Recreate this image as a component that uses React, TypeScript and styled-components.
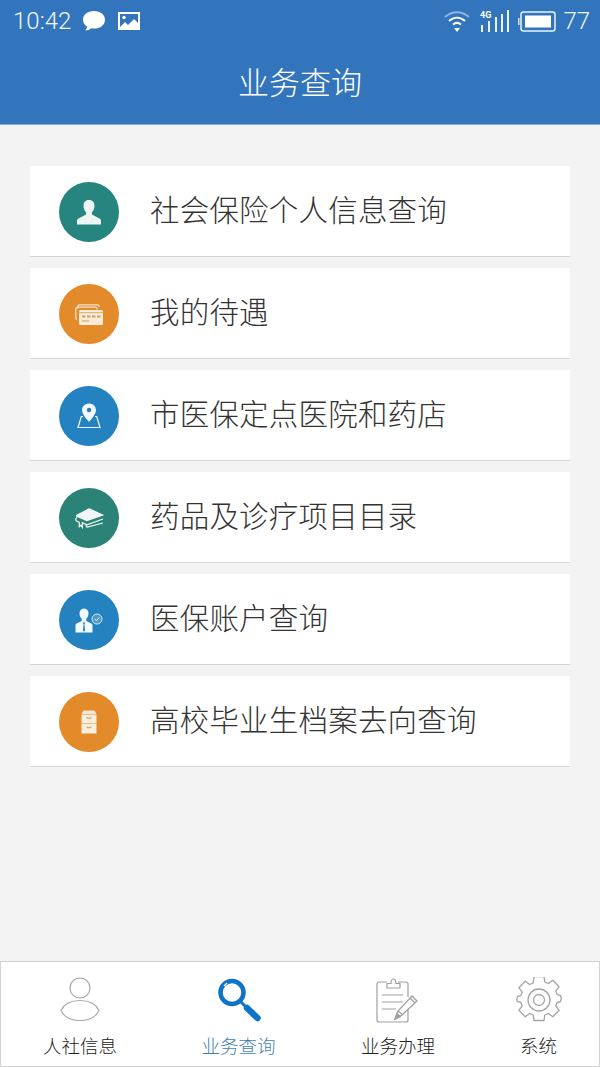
import React from 'react';
import styled, { createGlobalStyle } from 'styled-components';

const GlobalStyle = createGlobalStyle`
  html, body {
    margin: 0;
    padding: 0;
    background: #f3f3f3;
  }
  * {
    box-sizing: border-box;
  }
`;

const Wrapper = styled.div`
  width: 600px;
  height: 1067px;
  display: flex;
  flex-direction: column;
  background: #f3f3f3;
  font-family: 'Noto Sans CJK SC', 'Noto Sans', sans-serif;
  overflow: hidden;
`;

const Header = styled.header`
  height: 125px;
  flex: none;
  background: #3375bd;
  border-bottom: 1px solid #7fb0dc;
  color: #fff;
`;

const StatusBar = styled.div`
  height: 42px;
  padding: 0 10px 0 13px;
  display: flex;
  align-items: center;
  justify-content: space-between;
`;

const StatusGroup = styled.div`
  display: flex;
  align-items: center;
`;

const StatusText = styled.span<{ $gap?: number }>`
  margin-left: ${(props) => props.$gap ?? 0}px;
  font-family: Roboto, sans-serif;
  font-size: 24px;
  font-weight: 300;
  color: #f2f7fc;
`;

const StatusIcon = styled.svg<{ $gap?: number }>`
  margin-left: ${(props) => props.$gap ?? 0}px;
`;

const Title = styled.h1`
  margin: 0;
  height: 80px;
  display: flex;
  align-items: center;
  justify-content: center;
  font-size: 31px;
  font-weight: 300;
  padding-bottom: 4px;
`;

const List = styled.main`
  flex: 1;
  padding: 41px 30px 0;
  display: flex;
  flex-direction: column;
  gap: 11px;
`;

const Row = styled.div`
  height: 91px;
  padding: 2px 0 0 29px;
  display: flex;
  align-items: center;
  gap: 31px;
  background: #fff;
  border-bottom: 1px solid #d6d6d6;
`;

const Badge = styled.div<{ $color: string }>`
  width: 60px;
  height: 60px;
  flex: none;
  border-radius: 50%;
  background: ${(props) => props.$color};
  display: flex;
  align-items: center;
  justify-content: center;
`;

const RowText = styled.span`
  font-size: 29.5px;
  font-weight: 300;
  color: #333;
  letter-spacing: 0.2px;
  padding-bottom: 8px;
`;

const TabBar = styled.nav`
  height: 106px;
  flex: none;
  display: grid;
  grid-template-columns: 158px 159px 160px 1fr;
  background: #fff;
  border: 1px solid #d2d2d2;
`;

const Tab = styled.div`
  display: flex;
  flex-direction: column;
  align-items: center;
  padding-top: 14px;
`;

const TabIcon = styled.div`
  width: 48px;
  height: 48px;
  display: flex;
  align-items: center;
  justify-content: center;
`;

const TabLabel = styled.span<{ $active?: boolean }>`
  margin-top: 8px;
  font-size: 18.5px;
  font-weight: 300;
  line-height: 26px;
  color: ${(props) => (props.$active ? '#3f7fb0' : '#222')};
`;

const PersonIcon = () => (
  <svg width="26" height="26" viewBox="0 0 26 26" fill="#eef6f5">
    <path d="M13 1C9.300 1 7.500 3.600 7.500 6.800c0 2.800 1 5 2.600 6.400v2.300L2.500 19.500C1.500 20 1 21 1 22v3.500h24V22c0-1-.5-2-1.500-2.500l-7.600-4v-2.300c1.600-1.400 2.600-3.600 2.600-6.400C18.500 3.600 16.700 1 13 1z" />
  </svg>
);

const CardIcon = () => (
  <svg width="28" height="21" viewBox="0 0 28 21">
    <path d="M24 3V2.500C24 1.500 23.300.8 22.300.8H4.500C3.500.8 2.800 1.500 2.800 2.500V5" fill="none" stroke="#f5e6cf" strokeWidth="1.200" />
    <path d="M22 5.500V4.800c0-1-.7-1.600-1.600-1.600H2.500C1.500 3.200.8 3.900.8 4.800V14c0 .8.5 1.400 1.300 1.500" fill="none" stroke="#f5e6cf" strokeWidth="1.200" />
    <rect x="4" y="6" width="24" height="15" rx="1.500" fill="#f8ecd9" />
    <rect x="4" y="8" width="24" height="1.200" fill="#e2b27a" />
    <path d="M7 12.500h3.500M12 12.500h3.500M17 12.500h3.500M22 12.500h3.500" stroke="#d4a066" strokeWidth="2" />
    <path d="M7 17h7" stroke="#d9ae7a" strokeWidth="1.300" />
  </svg>
);

const MapPinIcon = () => (
  <svg width="24" height="26" viewBox="0 0 24 26">
    <path d="M12 0.500c-4.200 0-7 3-7 6.600 0 3.600 4 8.600 7 11.900 3-3.300 7-8.300 7-11.900 0-3.600-2.800-6.600-7-6.600z" fill="#f2f8fc" />
    <circle cx="12" cy="7" r="2.200" fill="#2382bf" />
    <path d="M6 13.500H4.300L1 24.500h22l-3.300-11H18" fill="none" stroke="#f2f8fc" strokeWidth="1.200" />
  </svg>
);

const BookIcon = () => (
  <svg width="29" height="21" viewBox="0 0 29 21">
    <path d="M13.500.5c.5-.2 1-.2 1.500 0l13.500 6.300c.4.200.4.600 0 .8L11.800 13.300 2 9c-1.400-.6-1.400-1.500-.5-2.200z" fill="#f0f7f5" />
    <path d="M1.800 9.500c-1.600 1.400-1.400 3 .2 3.800l2.300 1.100v4.300l1.600-1.500 1.500 2.200v-4.700l4.500 2.200L28 11M11.900 16.200c-1.200 1-1 2.400.2 2.900L28 15" fill="none" stroke="#f0f7f5" strokeWidth="1.200" />
  </svg>
);

const AccountIcon = () => (
  <svg width="28" height="25" viewBox="0 0 28 25">
    <path d="M9 0.500c-3 0-4.500 2.200-4.500 4.800 0 2.300.9 4.300 2.200 5.500v2.200L1.500 15.500C.7 16 .5 16.700.5 17.500v7h17v-7c0-.8-.2-1.500-1-2l-5.200-2.500v-2.200c1.300-1.200 2.200-3.200 2.200-5.500C13.500 2.700 12 .5 9 .5z" fill="#f2f8fc" />
    <path d="M9 13.500l-1 1.700.6 1.200-.7 5.600 1.100 2 1.100-2-.7-5.600.6-1.200z" fill="#2382bf" />
    <circle cx="22" cy="11" r="5" fill="#4d9ac9" stroke="#d7e8f3" strokeWidth="1" />
    <path d="M19.700 11l1.700 1.700 3-3.200" fill="none" stroke="#f2f8fc" strokeWidth="1" />
  </svg>
);

const CabinetIcon = () => (
  <svg width="16" height="24" viewBox="0 0 16 24">
    <path d="M2.500 0.500h11L15.500 4H.5z" fill="#f3e6d2" />
    <rect x=".5" y="4.500" width="15" height="9" fill="#f9eedd" />
    <rect x=".5" y="14" width="15" height="9.500" fill="#f9eedd" />
    <path d="M6 7v1.200h4V7M6 16.500v1.200h4v-1.200" fill="none" stroke="#cf9c5a" strokeWidth="1" />
  </svg>
);

const UserOutlineIcon = () => (
  <svg width="40" height="46" viewBox="0 0 40 46" fill="none" stroke="#a8a8a8" strokeWidth="1.200">
    <circle cx="20" cy="11" r="10" />
    <path d="M1 33.500C4 27 11 23.500 20 23.500s16 3.500 19 10c-3 6.500-10 10-19 10S4 40 1 33.500z" />
  </svg>
);

const SearchIcon = () => (
  <svg width="44" height="44" viewBox="0 0 44 44" fill="none">
    <circle cx="15" cy="14.500" r="11.500" stroke="#0f74c8" strokeWidth="4.500" />
    <path d="M23 23l6 6" stroke="#0f74c8" strokeWidth="3" />
    <path d="M30 30l10.500 10" stroke="#0f74c8" strokeWidth="6.500" strokeLinecap="round" />
    <path d="M7 8l3-3" stroke="#fff" strokeWidth="1.500" />
  </svg>
);

const ClipboardIcon = () => (
  <svg width="44" height="46" viewBox="0 0 44 46" fill="none" stroke="#a0a0a0" strokeWidth="1.200">
    <path d="M11 5H3c-1 0-2 1-2 2v36c0 1 1 2 2 2h27c1 0 2-1 2-2V32M32 20V7c0-1-1-2-2-2h-8" />
    <path d="M11 11V6.500h4c0-6 5-6 5 0h4V11z" />
    <path d="M6 18h21M6 25h21M6 32h14" />
    <path d="M19 42l3-8 14-15 5 5-15 14zM22 34l5 4M34 21l5 5" strokeWidth="1.300" />
    <path d="M19 42l2-5.500 3.500 3z" fill="#a0a0a0" />
  </svg>
);

const GearIcon = () => (
  <svg width="46" height="46" viewBox="0 0 46 46" fill="none" stroke="#a4a4a4" strokeWidth="1.300">
    <path d="M18 1.500h10l.8 5.500 3.500 1.500 4.500-3.300 6.300 6.500-3.300 4.500 1.500 3.500 3.200.800c.700 1.500.700 3.500.700 2.500s0 2-.700 3.500l-3.200.800-1.500 3.500 3.300 4.500-6.300 6.500-4.500-3.300-3.500 1.500-.8 5.500H18l-.8-5.500-3.500-1.500-4.500 3.300-6.300-6.500 3.300-4.500-1.500-3.500-3.200-.800C.8 26 .8 24 .8 25s0-2 .7-3.500l3.200-.800 1.500-3.500-3.300-4.500 6.300-6.500 4.500 3.300 3.500-1.500z" strokeLinejoin="round" transform="translate(0 -2)" />
    <circle cx="23" cy="23" r="11" />
    <circle cx="23" cy="23" r="5.500" />
  </svg>
);

const rows = [
  { text: '社会保险个人信息查询', color: '#26857f', icon: <PersonIcon /> },
  { text: '我的待遇', color: '#e38a2b', icon: <CardIcon /> },
  { text: '市医保定点医院和药店', color: '#2382bf', icon: <MapPinIcon /> },
  { text: '药品及诊疗项目目录', color: '#2b8377', icon: <BookIcon /> },
  { text: '医保账户查询', color: '#2382bf', icon: <AccountIcon /> },
  { text: '高校毕业生档案去向查询', color: '#e38a2b', icon: <CabinetIcon /> },
];

const tabs = [
  { label: '人社信息', icon: <UserOutlineIcon /> },
  { label: '业务查询', icon: <SearchIcon />, active: true },
  { label: '业务办理', icon: <ClipboardIcon /> },
  { label: '系统', icon: <GearIcon /> },
];

function App() {
  return (
    <Wrapper>
      <GlobalStyle />
      <Header>
        <StatusBar>
          <StatusGroup>
            <StatusText>10:42</StatusText>
            <StatusIcon $gap={11} width="24" height="22" viewBox="0 0 24 22">
              <path d="M12 1C5.500 1 1 4.700 1 9.700c0 2.900 1.500 5.300 4 6.900-.1 1.600-.9 3-2 4 2.700 0 4.700-1 6-2.300 1 .2 2 .3 3 .3 6.500 0 11-3.900 11-8.900S18.500 1 12 1z" fill="#fff" />
            </StatusIcon>
            <StatusIcon $gap={11} width="24" height="20" viewBox="0 0 24 20">
              <path d="M1 1h22v18H1z" fill="#fff" />
              <path d="M3 3h18v9l-4-4-6 6-3-3-5 5z" fill="#3375bd" />
              <circle cx="7" cy="6.500" r="1.700" fill="#fff" />
            </StatusIcon>
          </StatusGroup>
          <StatusGroup>
            <StatusIcon width="26" height="24" viewBox="0 0 26 24" fill="none">
              <path d="M1 8c7-6.500 17-6.500 24 0" stroke="#8fb5dd" strokeWidth="2" />
              <path d="M5 12c5-4.500 11-4.500 16 0" stroke="#fff" strokeWidth="2" />
              <path d="M9 15.500c2.500-2 5.500-2 8 0" stroke="#fff" strokeWidth="2" />
              <path d="M10 19h6l-3 4z" fill="#fff" />
            </StatusIcon>
            <StatusIcon $gap={10} width="29" height="24" viewBox="0 0 29 24">
              <path d="M2 16v7M9 12v11M16 8v15M22 5v18M28 1v22" stroke="#eaf2fa" strokeWidth="2" />
              <text x="0" y="9" fontSize="9" fontWeight="700" fontFamily="Roboto, sans-serif" fill="#fff">4G</text>
            </StatusIcon>
            <StatusIcon $gap={9} width="38" height="21" viewBox="0 0 38 21" fill="none">
              <rect x="3" y="1" width="34" height="19" rx="2.500" stroke="#eaf2fa" strokeWidth="1.500" />
              <rect x="7" y="4.500" width="26" height="12" fill="#fff" />
              <path d="M0.800 7v7" stroke="#eaf2fa" strokeWidth="1.300" />
            </StatusIcon>
            <StatusText $gap={7}>77</StatusText>
          </StatusGroup>
        </StatusBar>
        <Title>业务查询</Title>
      </Header>
      <List>
        {rows.map((row) => (
          <Row key={row.text}>
            <Badge $color={row.color}>{row.icon}</Badge>
            <RowText>{row.text}</RowText>
          </Row>
        ))}
      </List>
      <TabBar>
        {tabs.map((tab) => (
          <Tab key={tab.label}>
            <TabIcon>{tab.icon}</TabIcon>
            <TabLabel $active={tab.active}>{tab.label}</TabLabel>
          </Tab>
        ))}
      </TabBar>
    </Wrapper>
  );
}

export default App;
